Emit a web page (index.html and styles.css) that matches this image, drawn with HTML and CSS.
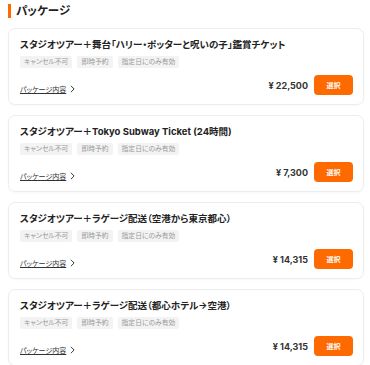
FILE: index.html
```html
<!DOCTYPE html>
<html lang="ja">
<head>
<meta charset="utf-8">
<link rel="stylesheet" href="styles.css">
</head>
<body>
<div class="page">
  <h2 class="heading">パッケージ</h2>
  <div class="list">
    <div class="card">
      <div class="title">スタジオツアー＋舞台「ハリー・ポッターと呪いの子」鑑賞チケット</div>
      <div class="tags"><span class="tag">キャンセル不可</span><span class="tag">即時予約</span><span class="tag">指定日にのみ有効</span></div>
      <div class="bottom">
        <a class="link"><span class="u">パッケージ内容</span><svg class="chev" viewBox="0 0 6 10" width="5" height="8"><path d="M1 1l4 4-4 4" fill="none" stroke="#333" stroke-width="1.2"/></svg></a>
        <div class="buy"><span class="price">¥ 22,500</span><button class="btn">選択</button></div>
      </div>
    </div>
    <div class="card">
      <div class="title">スタジオツアー＋Tokyo Subway Ticket (24時間)</div>
      <div class="tags"><span class="tag">キャンセル不可</span><span class="tag">即時予約</span><span class="tag">指定日にのみ有効</span></div>
      <div class="bottom">
        <a class="link"><span class="u">パッケージ内容</span><svg class="chev" viewBox="0 0 6 10" width="5" height="8"><path d="M1 1l4 4-4 4" fill="none" stroke="#333" stroke-width="1.2"/></svg></a>
        <div class="buy"><span class="price">¥ 7,300</span><button class="btn">選択</button></div>
      </div>
    </div>
    <div class="card">
      <div class="title">スタジオツアー＋ラゲージ配送（空港から東京都心）</div>
      <div class="tags"><span class="tag">キャンセル不可</span><span class="tag">即時予約</span><span class="tag">指定日にのみ有効</span></div>
      <div class="bottom">
        <a class="link"><span class="u">パッケージ内容</span><svg class="chev" viewBox="0 0 6 10" width="5" height="8"><path d="M1 1l4 4-4 4" fill="none" stroke="#333" stroke-width="1.2"/></svg></a>
        <div class="buy"><span class="price">¥ 14,315</span><button class="btn">選択</button></div>
      </div>
    </div>
    <div class="card">
      <div class="title">スタジオツアー＋ラゲージ配送（都心ホテル→空港）</div>
      <div class="tags"><span class="tag">キャンセル不可</span><span class="tag">即時予約</span><span class="tag">指定日にのみ有効</span></div>
      <div class="bottom">
        <a class="link"><span class="u">パッケージ内容</span><svg class="chev" viewBox="0 0 6 10" width="5" height="8"><path d="M1 1l4 4-4 4" fill="none" stroke="#333" stroke-width="1.2"/></svg></a>
        <div class="buy"><span class="price">¥ 14,315</span><button class="btn">選択</button></div>
      </div>
    </div>
  </div>
</div>
</body>
</html>
```
FILE: styles.css
```css
* { box-sizing: border-box; }
body {
  margin: 0;
  background: #fff;
  font-family: Inter, "Noto Sans CJK JP", sans-serif;
  color: #222;
  font-feature-settings: "palt";
}
.page { padding: 4px 6px 0 8px; }
.heading {
  margin: 0;
  font-size: 11.5px;
  line-height: 14px;
  font-weight: 700;
  padding-left: 5px;
  border-left: 3px solid #ff6a00;
  color: #222;
}
.list {
  margin-top: 10px;
  display: flex;
  flex-direction: column;
  gap: 10px;
}
.card {
  border: 1px solid #ededed;
  border-radius: 7px;
  padding: 9px 10px 9px 11px;
  box-shadow: 0 1px 2px rgba(0,0,0,0.03);
}
.title {
  font-size: 9.5px;
  line-height: 14px;
  font-weight: 700;
  color: #222;
  white-space: nowrap;
}
.tags {
  margin-top: 4px;
  display: flex;
  gap: 5px;
}
.tag {
  background: #f3f3f3;
  color: #999;
  font-size: 6.8px;
  line-height: 12px;
  padding: 0 4px;
  border-radius: 2px;
}
.bottom {
  margin-top: 7px;
  height: 20px;
  display: flex;
  align-items: center;
  justify-content: space-between;
}
.link {
  display: flex;
  align-items: center;
  gap: 4px;
  font-size: 7px;
  color: #333;
  padding-top: 8px;
}
.u { text-decoration: underline; text-underline-offset: 1px; }
.chev { display: block; }
.buy {
  display: flex;
  align-items: center;
  gap: 6px;
}
.price {
  font-size: 9px;
  font-weight: 700;
  color: #333;
}
.btn {
  width: 39px;
  height: 20px;
  border: 0;
  border-radius: 4px;
  background: #ff6a00;
  color: #fff;
  font-family: inherit;
  font-size: 7px;
  font-weight: 700;
  padding: 0;
}
```
